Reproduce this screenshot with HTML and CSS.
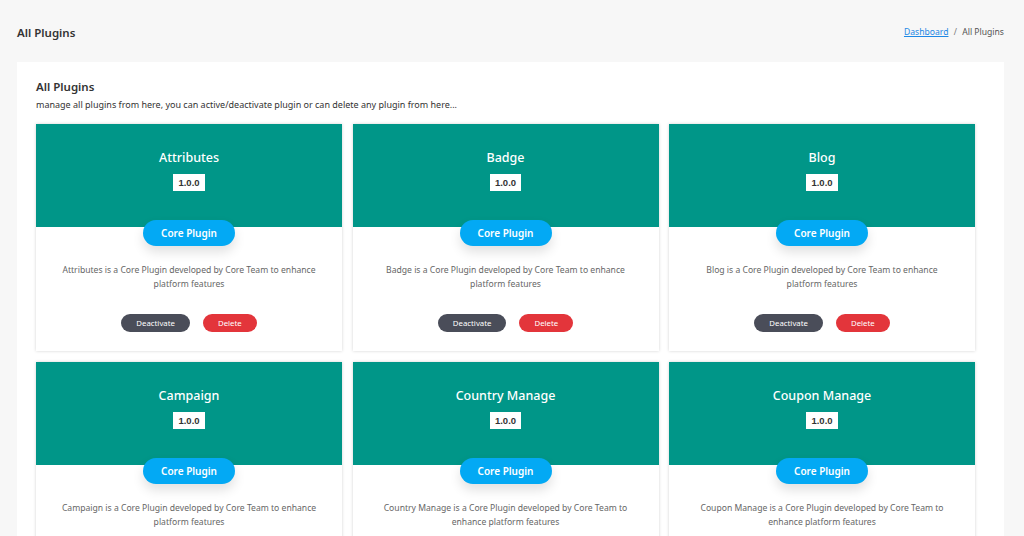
FILE: index.html
```html
<!DOCTYPE html>
<html lang="en">
<head>
  <meta charset="UTF-8">
  <meta name="viewport" content="width=device-width, initial-scale=1.0">
  <title>All Plugins</title>
  <link rel="stylesheet" href="styles.css">
</head>
<body>
  <div class="page-header">
    <h2>All Plugins</h2>
    <div class="breadcrumb">
      <a href="#">Dashboard</a>
      <span class="sep">/</span>
      <span>All Plugins</span>
    </div>
  </div>

  <div class="panel">
    <h3>All Plugins</h3>
    <p class="lead">manage all plugins from here, you can active/deactivate plugin or can delete any plugin from here...</p>

    <div class="plugin-grid">
      <div class="plugin-card">
        <div class="plugin-top">
          <h4>Attributes</h4>
          <span class="version">1.0.0</span>
          <span class="core-pill">Core Plugin</span>
        </div>
        <div class="plugin-body">
          <p>Attributes is a Core Plugin developed by Core Team to enhance platform features</p>
          <div class="actions">
            <button class="btn btn-dark">Deactivate</button>
            <button class="btn btn-red">Delete</button>
          </div>
        </div>
      </div>

      <div class="plugin-card">
        <div class="plugin-top">
          <h4>Badge</h4>
          <span class="version">1.0.0</span>
          <span class="core-pill">Core Plugin</span>
        </div>
        <div class="plugin-body">
          <p>Badge is a Core Plugin developed by Core Team to enhance platform features</p>
          <div class="actions">
            <button class="btn btn-dark">Deactivate</button>
            <button class="btn btn-red">Delete</button>
          </div>
        </div>
      </div>

      <div class="plugin-card">
        <div class="plugin-top">
          <h4>Blog</h4>
          <span class="version">1.0.0</span>
          <span class="core-pill">Core Plugin</span>
        </div>
        <div class="plugin-body">
          <p>Blog is a Core Plugin developed by Core Team to enhance platform features</p>
          <div class="actions">
            <button class="btn btn-dark">Deactivate</button>
            <button class="btn btn-red">Delete</button>
          </div>
        </div>
      </div>

      <div class="plugin-card">
        <div class="plugin-top">
          <h4>Campaign</h4>
          <span class="version">1.0.0</span>
          <span class="core-pill">Core Plugin</span>
        </div>
        <div class="plugin-body">
          <p>Campaign is a Core Plugin developed by Core Team to enhance platform features</p>
          <div class="actions">
            <button class="btn btn-dark">Deactivate</button>
            <button class="btn btn-red">Delete</button>
          </div>
        </div>
      </div>

      <div class="plugin-card">
        <div class="plugin-top">
          <h4>Country Manage</h4>
          <span class="version">1.0.0</span>
          <span class="core-pill">Core Plugin</span>
        </div>
        <div class="plugin-body">
          <p>Country Manage is a Core Plugin developed by Core Team to enhance platform features</p>
          <div class="actions">
            <button class="btn btn-dark">Deactivate</button>
            <button class="btn btn-red">Delete</button>
          </div>
        </div>
      </div>

      <div class="plugin-card">
        <div class="plugin-top">
          <h4>Coupon Manage</h4>
          <span class="version">1.0.0</span>
          <span class="core-pill">Core Plugin</span>
        </div>
        <div class="plugin-body">
          <p>Coupon Manage is a Core Plugin developed by Core Team to enhance platform features</p>
          <div class="actions">
            <button class="btn btn-dark">Deactivate</button>
            <button class="btn btn-red">Delete</button>
          </div>
        </div>
      </div>
    </div>
  </div>
</body>
</html>
```

FILE: styles.css
```css
body {
  font-family: 'Noto Sans', sans-serif;
  background: #f7f7f7;
  color: #333;
  margin: 0;
}

.page-header {
  display: flex;
  justify-content: space-between;
  align-items: center;
  height: 62px;
  padding: 2px 20px 0 17px;
  box-sizing: border-box;
}

.page-header h2 {
  margin: 0;
  font-size: 11.5px;
  font-weight: 600;
  color: #333;
}

.breadcrumb {
  font-size: 8.6px;
  color: #555;
}

.breadcrumb a {
  color: #1e88e5;
}

.breadcrumb .sep {
  margin: 0 3px;
  color: #777;
}

.panel {
  background: #fff;
  margin: 0 20px 0 17px;
  padding: 17px 29px 20px 19px;
}

.panel h3 {
  margin: 0;
  font-size: 11.5px;
  font-weight: 600;
  color: #333;
}

.lead {
  margin: 4px 0 13px;
  font-size: 9px;
  color: #333;
}

.plugin-grid {
  display: grid;
  grid-template-columns: repeat(3, 306px);
  column-gap: 10.5px;
  row-gap: 11px;
}

.plugin-card {
  background: #fff;
  box-shadow: 0 0 3px rgba(0, 0, 0, 0.18);
}

.plugin-top {
  background: #009688;
  height: 103px;
  display: flex;
  flex-direction: column;
  align-items: center;
  position: relative;
  color: #fff;
}

.plugin-top h4 {
  margin: 25px 0 8px;
  font-size: 12.5px;
  font-weight: 500;
}

.version {
  background: #fff;
  color: #333;
  font-family: 'Liberation Sans', sans-serif;
  font-size: 9.5px;
  font-weight: 600;
  padding: 3px 5px;
  line-height: 11px;
}

.core-pill {
  position: absolute;
  left: 50%;
  bottom: -19px;
  transform: translateX(-50%);
  width: 92px;
  height: 26px;
  line-height: 26px;
  text-align: center;
  border-radius: 13px;
  background: #03a9f4;
  color: #fff;
  font-size: 10px;
  font-weight: 600;
  box-shadow: 0 6px 12px rgba(0, 0, 0, 0.12);
}

.plugin-body {
  padding: 36px 22px 19px;
  text-align: center;
}

.plugin-body p {
  margin: 0;
  font-size: 8.6px;
  line-height: 14px;
  color: #666;
}

.actions {
  display: flex;
  justify-content: center;
  gap: 13px;
  margin-top: 23px;
}

.btn {
  border: none;
  border-radius: 9px;
  height: 18px;
  padding: 0 15px;
  font-family: 'Noto Sans', sans-serif;
  font-size: 7.8px;
  color: #fff;
  cursor: pointer;
}

.btn-dark {
  background: #4a4d59;
}

.btn-red {
  background: #e3353b;
}
```
